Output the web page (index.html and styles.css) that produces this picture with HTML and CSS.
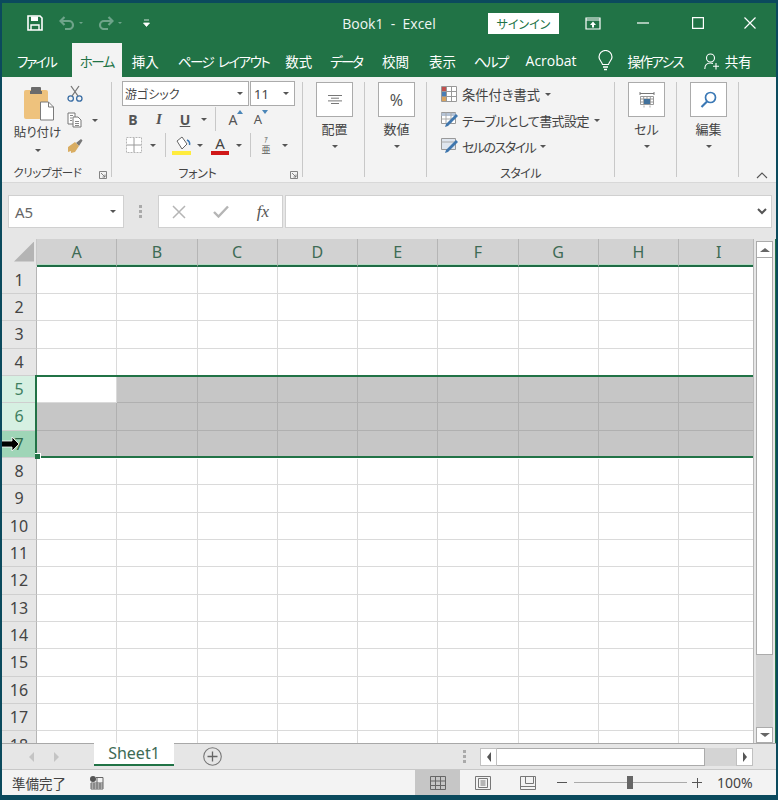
FILE: index.html
```html
<!DOCTYPE html>
<html lang="ja">
<head>
<meta charset="utf-8">
<title>Book1 - Excel</title>
<link rel="stylesheet" href="styles.css">
</head>
<body>
<div class="window">
  <header class="titlebar">
    <div class="qat">
      <svg class="q-save" width="16" height="16" viewBox="0 0 16 16"><path d="M1 1h12l2 2v12H1z" fill="none" stroke="#fff" stroke-width="1.6"/><path d="M4 1.5h7v4.5H4z" fill="#fff"/><path d="M4 15v-5h8v5" fill="none" stroke="#fff" stroke-width="1.4"/></svg>
      <svg class="q-undo" width="16" height="14" viewBox="0 0 16 14"><path d="M2 5h8a4 4 0 0 1 0 8H6M5.500 1 1.500 5l4 4" fill="none" stroke="#6ea48a" stroke-width="2.200"/></svg>
      <span class="q-drop"></span>
      <svg class="q-redo" width="16" height="14" viewBox="0 0 16 14"><path d="M14 5H6a4 4 0 0 0 0 8h4M10.500 1l4 4-4 4" fill="none" stroke="#6ea48a" stroke-width="2.200"/></svg>
      <span class="q-drop"></span>
      <svg class="q-more" width="7" height="8" viewBox="0 0 7 8"><path d="M1 1h5M0.500 4h6l-3 3.500z" fill="#fff" stroke="#fff" stroke-width="0.800"/></svg>
    </div>
    <div class="doc-title">Book1&nbsp; -&nbsp; Excel</div>
    <div class="signin">サインイン</div>
    <svg class="ctl-display" width="16" height="13" viewBox="0 0 16 13"><path d="M1 1h14v11H1z M1 3h14" fill="none" stroke="#fff" stroke-width="1.200"/><path d="M8 4.500 11 8H9v2.500H7V8H5z" fill="#fff"/></svg>
    <svg class="ctl-min" width="12" height="2" viewBox="0 0 12 2"><path d="M0 1h12" stroke="#fff" stroke-width="1.200"/></svg>
    <svg class="ctl-max" width="12" height="12" viewBox="0 0 12 12"><path d="M.6.600h10.800v10.800H.6z" fill="none" stroke="#fff" stroke-width="1.200"/></svg>
    <svg class="ctl-close" width="12" height="12" viewBox="0 0 12 12"><path d="M.5.500l11 11M11.500.500l-11 11" stroke="#fff" stroke-width="1.200"/></svg>
  </header>

  <nav class="tabs">
    <span class="tab t-file">ファイル</span>
    <span class="tab active">ホーム</span>
    <span class="tab t-ins">挿入</span>
    <span class="tab t-page">ページ レイアウト</span>
    <span class="tab t-fx">数式</span>
    <span class="tab t-data">データ</span>
    <span class="tab t-rev">校閲</span>
    <span class="tab t-view">表示</span>
    <span class="tab t-help">ヘルプ</span>
    <span class="tab t-acro">Acrobat</span>
    <svg class="bulb" width="15" height="21" viewBox="0 0 15 21"><path d="M4.500 14.500C4 11.500 1 10.500 1 7a6.500 6.500 0 0 1 13 0c0 3.500-3 4.500-3.500 7.500z" fill="none" stroke="#fff" stroke-width="1.200"/><path d="M5 17h5M6 19.500h3" stroke="#fff" stroke-width="1.300"/></svg>
    <span class="tab t-tell">操作アシス</span>
    <svg class="person" width="16" height="17" viewBox="0 0 16 17"><circle cx="6.500" cy="5" r="4" fill="none" stroke="#fff" stroke-width="1.100"/><path d="M.8 16c0-3.500 2-6 5.700-6 1 0 1.800.2 2.500.5M12 10v6.500M9 13.300h6" fill="none" stroke="#fff" stroke-width="1.100"/></svg>
    <span class="tab t-share">共有</span>
  </nav>

  <section class="ribbon">
    <div class="group g-clip">
      <div class="group-body clip-body">
        <div class="paste">
          <svg width="32" height="36" viewBox="0 0 32 36"><rect x="1" y="5" width="24" height="29" rx="2" fill="#eec27d"/><rect x="8" y="2" width="10" height="7" rx="1" fill="#6b6b6b"/><rect x="7" y="6" width="12" height="3" fill="#6b6b6b"/><path d="M17.500 17h8l5 5v13h-13z" fill="#fff" stroke="#7b7b7b"/><path d="M25.500 17v5h5" fill="none" stroke="#7b7b7b"/></svg>
          <span class="big-label">貼り付け</span>
          <span class="caret"></span>
        </div>
        <div class="clip-tools">
          <svg width="16" height="17" viewBox="0 0 16 17"><circle cx="3.700" cy="13.500" r="2.700" fill="none" stroke="#3a6ea5" stroke-width="1.300"/><circle cx="12.300" cy="13.500" r="2.700" fill="none" stroke="#3a6ea5" stroke-width="1.300"/><path d="M5 11 12 1M11 11 4 1" stroke="#777" stroke-width="1.300"/></svg>
          <div class="copy-line">
            <svg width="16" height="16" viewBox="0 0 16 16"><path d="M1 1h7v11H1z" fill="#fff" stroke="#777"/><path d="M6 5h5l3 3v7H6z" fill="#fff" stroke="#777"/><path d="M3 3.500h3M3 6h2M3 8.500h2M8 9.500h4M8 11.500h4M8 13.500h4" stroke="#888"/></svg>
            <span class="caret"></span>
          </div>
          <svg width="16" height="15" viewBox="0 0 16 15"><path d="M9 5 14 1l1.500 1.500L12 8z" fill="#777"/><path d="M1 9 8 4l4 4-4 6-4 1 0-2-3 1z" fill="#d9ad62"/></svg>
        </div>
      </div>
      <div class="group-label clip-label">クリップボード<svg class="launcher" width="8" height="8" viewBox="0 0 8 8"><path d="M.5 7.500v-7h7v7zM2 2l4 4M6 3.500V6H3.500" fill="none" stroke="#777" stroke-width=".9"/></svg></div>
    </div>

    <div class="group g-font">
      <div class="group-body font-body">
        <div class="font-row combos">
          <div class="combo c-name"><span>游ゴシック</span><span class="caret"></span></div>
          <div class="combo c-size"><span>11</span><span class="caret"></span></div>
        </div>
        <div class="font-row r2">
          <span class="fmt bold">B</span>
          <span class="fmt ital">I</span>
          <span class="fmt und">U</span>
          <span class="caret"></span>
          <span class="vsep vs-a"></span>
          <span class="fmt grow">A<svg width="6" height="4" viewBox="0 0 6 4"><path d="M3 0l3 4H0z" fill="#4a86b8"/></svg></span>
          <span class="fmt shrink">A<svg width="6" height="4" viewBox="0 0 6 4"><path d="M3 4 6 0H0z" fill="#4a86b8"/></svg></span>
        </div>
        <div class="font-row r3">
          <svg class="i-border" width="16" height="16" viewBox="0 0 16 16"><path d="M.5.500h15v15H.5z" fill="#fff" stroke="#b5b5b5" stroke-dasharray="2 1"/><path d="M8 1v14M1 8h14" stroke="#9a9a9a"/></svg>
          <span class="caret c1"></span>
          <span class="vsep vs-b"></span>
          <svg class="i-fill" width="20" height="20" viewBox="0 0 20 20"><path d="M5 6 10 2l5 7-5 5z" fill="#fff" stroke="#666"/><path d="M15 5c2 1 3 3 2.500 5" fill="none" stroke="#3a78b5" stroke-width="1.500"/><rect x="0" y="16" width="19" height="4" fill="#ffec3d"/></svg>
          <span class="caret c2"></span>
          <span class="color-a">A</span>
          <span class="caret c3"></span>
          <span class="vsep vs-c"></span>
          <span class="phon"><small>ｱ</small><span>亜</span></span>
          <span class="caret c4"></span>
        </div>
      </div>
      <div class="group-label font-label">フォント<svg class="launcher" width="8" height="8" viewBox="0 0 8 8"><path d="M.5 7.500v-7h7v7zM2 2l4 4M6 3.500V6H3.500" fill="none" stroke="#777" stroke-width=".9"/></svg></div>
    </div>

    <div class="group g-col">
      <div class="group-body col-body">
        <div class="col-btn"><svg width="14" height="9" viewBox="0 0 14 9"><path d="M0 .5h14M3 3.200h8M0 5.900h14M3 8.500h8" stroke="#777"/></svg></div>
        <span class="big-label">配置</span>
        <span class="caret"></span>
      </div>
    </div>
    <div class="group g-col">
      <div class="group-body col-body">
        <div class="col-btn pct">%</div>
        <span class="big-label">数値</span>
        <span class="caret"></span>
      </div>
    </div>

    <div class="group g-style">
      <div class="group-body style-body">
        <div class="style-row sr1">
          <svg width="16" height="16" viewBox="0 0 16 16"><path d="M.5.500h15v15H.5zM.5 5.500h15M.5 10.500h15M5.500.5v15M10.500.5v15" fill="#fff" stroke="#999"/><rect x="1" y="1" width="4" height="4" fill="#c0504d"/><rect x="1" y="6" width="4" height="4" fill="#4a7eb5"/><rect x="1" y="11" width="4" height="4" fill="#d9a35e"/></svg>
          <span>条件付き書式</span><span class="caret"></span>
        </div>
        <div class="style-row sr2">
          <svg width="18" height="16" viewBox="0 0 18 16"><path d="M.5.500h14v11H.5z" fill="#fff" stroke="#999"/><path d="M.5 1h14v3H.5z" fill="#b5c3d6"/><path d="M5 .5v11M10 .5v11M.5 7h14" stroke="#aaa"/><path d="M4 15l3-1 10-10-2-2L5 12z" fill="#3f76ad"/></svg>
          <span>テーブルとして書式設定</span><span class="caret"></span>
        </div>
        <div class="style-row sr3">
          <svg width="18" height="16" viewBox="0 0 18 16"><path d="M.5.500h14v11H.5z" fill="#dfe6ef" stroke="#999"/><path d="M.5 4h14" stroke="#aaa"/><path d="M4 15l3-1 10-10-2-2L5 12z" fill="#3f76ad"/></svg>
          <span>セルのスタイル</span><span class="caret"></span>
        </div>
      </div>
      <div class="group-label style-label">スタイル</div>
    </div>

    <div class="group g-col">
      <div class="group-body col-body">
        <div class="col-btn"><svg width="16" height="17" viewBox="0 0 16 17"><path d="M1 1v3M15 1v3M1 2.500h14" stroke="#777"/><path d="M1.500 5.500h13v8h-13zM1.500 8h13M1.500 11h13M4.700 5.500v8M8 5.500v8M11.300 5.500v8" fill="none" stroke="#999"/><rect x="5" y="8" width="6" height="5" fill="#41719c"/><path d="M5 14.500v2M11 14.500v2" stroke="#aaa"/></svg></div>
        <span class="big-label">セル</span>
        <span class="caret"></span>
      </div>
    </div>
    <div class="group g-col">
      <div class="group-body col-body">
        <div class="col-btn"><svg width="17" height="17" viewBox="0 0 17 17"><circle cx="10.500" cy="6.500" r="5" fill="none" stroke="#3a78b5" stroke-width="1.700"/><path d="M7 10.500 1.500 16" stroke="#3a78b5" stroke-width="2.200"/></svg></div>
        <span class="big-label">編集</span>
        <span class="caret"></span>
      </div>
    </div>
    <svg class="collapse" width="12" height="7" viewBox="0 0 12 7"><path d="M1 6l5-5 5 5" fill="none" stroke="#555" stroke-width="1.100"/></svg>
  </section>

  <section class="formula">
    <div class="namebox"><span>A5</span><span class="caret"></span></div>
    <svg class="grip" width="4" height="13" viewBox="0 0 4 13"><path d="M0 0h3v3H0zM0 5h3v3H0zM0 10h3v3H0z" fill="#aaa"/></svg>
    <div class="fxbox">
      <svg width="14" height="14" viewBox="0 0 14 14"><path d="M1 1l12 12M13 1 1 13" stroke="#b5b5b5" stroke-width="1.500"/></svg>
      <svg width="16" height="13" viewBox="0 0 16 13"><path d="M1 7l4.500 4.500L15 1.500" fill="none" stroke="#b5b5b5" stroke-width="2.400"/></svg>
      <span class="fx">fx</span>
    </div>
    <div class="fxinput"><svg width="10" height="7" viewBox="0 0 10 7"><path d="M1 1l4 4 4-4" fill="none" stroke="#555" stroke-width="2"/></svg></div>
  </section>

  <section class="sheet">
    <div class="grid">
      <div class="gridcells">
        <div class="corner"><span></span></div><div class="ch">A</div><div class="ch">B</div><div class="ch">C</div><div class="ch">D</div><div class="ch">E</div><div class="ch">F</div><div class="ch">G</div><div class="ch">H</div><div class="ch">I</div>
        <div class="rh">1</div><div class="c"></div><div class="c"></div><div class="c"></div><div class="c"></div><div class="c"></div><div class="c"></div><div class="c"></div><div class="c"></div><div class="c"></div>
        <div class="rh">2</div><div class="c"></div><div class="c"></div><div class="c"></div><div class="c"></div><div class="c"></div><div class="c"></div><div class="c"></div><div class="c"></div><div class="c"></div>
        <div class="rh">3</div><div class="c"></div><div class="c"></div><div class="c"></div><div class="c"></div><div class="c"></div><div class="c"></div><div class="c"></div><div class="c"></div><div class="c"></div>
        <div class="rh">4</div><div class="c"></div><div class="c"></div><div class="c"></div><div class="c"></div><div class="c"></div><div class="c"></div><div class="c"></div><div class="c"></div><div class="c"></div>
        <div class="rh sel">5</div><div class="c active-cell"></div><div class="c s"></div><div class="c s"></div><div class="c s"></div><div class="c s"></div><div class="c s"></div><div class="c s"></div><div class="c s"></div><div class="c s"></div>
        <div class="rh sel">6</div><div class="c s"></div><div class="c s"></div><div class="c s"></div><div class="c s"></div><div class="c s"></div><div class="c s"></div><div class="c s"></div><div class="c s"></div><div class="c s"></div>
        <div class="rh hover">7</div><div class="c s"></div><div class="c s"></div><div class="c s"></div><div class="c s"></div><div class="c s"></div><div class="c s"></div><div class="c s"></div><div class="c s"></div><div class="c s"></div>
        <div class="rh">8</div><div class="c"></div><div class="c"></div><div class="c"></div><div class="c"></div><div class="c"></div><div class="c"></div><div class="c"></div><div class="c"></div><div class="c"></div>
        <div class="rh">9</div><div class="c"></div><div class="c"></div><div class="c"></div><div class="c"></div><div class="c"></div><div class="c"></div><div class="c"></div><div class="c"></div><div class="c"></div>
        <div class="rh">10</div><div class="c"></div><div class="c"></div><div class="c"></div><div class="c"></div><div class="c"></div><div class="c"></div><div class="c"></div><div class="c"></div><div class="c"></div>
        <div class="rh">11</div><div class="c"></div><div class="c"></div><div class="c"></div><div class="c"></div><div class="c"></div><div class="c"></div><div class="c"></div><div class="c"></div><div class="c"></div>
        <div class="rh">12</div><div class="c"></div><div class="c"></div><div class="c"></div><div class="c"></div><div class="c"></div><div class="c"></div><div class="c"></div><div class="c"></div><div class="c"></div>
        <div class="rh">13</div><div class="c"></div><div class="c"></div><div class="c"></div><div class="c"></div><div class="c"></div><div class="c"></div><div class="c"></div><div class="c"></div><div class="c"></div>
        <div class="rh">14</div><div class="c"></div><div class="c"></div><div class="c"></div><div class="c"></div><div class="c"></div><div class="c"></div><div class="c"></div><div class="c"></div><div class="c"></div>
        <div class="rh">15</div><div class="c"></div><div class="c"></div><div class="c"></div><div class="c"></div><div class="c"></div><div class="c"></div><div class="c"></div><div class="c"></div><div class="c"></div>
        <div class="rh">16</div><div class="c"></div><div class="c"></div><div class="c"></div><div class="c"></div><div class="c"></div><div class="c"></div><div class="c"></div><div class="c"></div><div class="c"></div>
        <div class="rh">17</div><div class="c"></div><div class="c"></div><div class="c"></div><div class="c"></div><div class="c"></div><div class="c"></div><div class="c"></div><div class="c"></div><div class="c"></div>
        <div class="rh">18</div><div class="c"></div><div class="c"></div><div class="c"></div><div class="c"></div><div class="c"></div><div class="c"></div><div class="c"></div><div class="c"></div><div class="c"></div>
      </div>
      <div class="selection"><span class="handle"></span></div>
      <svg class="pointer" width="20" height="16" viewBox="0 0 20 16"><path d="M1 5h11V1l7 7-7 7v-4H1z" fill="#000" stroke="#fff" stroke-width=".8"/></svg>
    </div>
    <aside class="vscroll">
      <div class="sb-btn"><span class="tri-up"></span></div>
      <div class="sb-thumb"></div>
      <div class="sb-track"></div>
      <div class="sb-btn"><span class="tri-down"></span></div>
    </aside>
  </section>

  <section class="sheetbar">
    <span class="nav-l"></span>
    <span class="nav-r"></span>
    <div class="sheet-tab">Sheet1</div>
    <svg class="add" width="19" height="19" viewBox="0 0 19 19"><circle cx="9.500" cy="9.500" r="8.800" fill="none" stroke="#777" stroke-width="1.100"/><path d="M9.500 4.500v10M4.500 9.500h10" stroke="#666" stroke-width="1.300"/></svg>
    <svg class="grip2" width="4" height="13" viewBox="0 0 4 13"><path d="M0 0h3v3H0zM0 5h3v3H0zM0 10h3v3H0z" fill="#aaa"/></svg>
    <div class="hscroll">
      <div class="hb"><span class="tri-left"></span></div>
      <div class="h-thumb"></div>
      <div class="h-track"></div>
      <div class="hb"><span class="tri-right"></span></div>
    </div>
  </section>

  <footer class="status">
    <span class="ready">準備完了</span>
    <svg class="macro" width="14" height="14" viewBox="0 0 14 14"><circle cx="3" cy="3" r="3" fill="#555"/><path d="M1 7h12v6H1zM1 9h12M1 11h12M4 7v6M7 2v11M10 7v6M6 1.500h7V7" fill="none" stroke="#666"/></svg>
    <div class="view-btn on"><svg width="16" height="14" viewBox="0 0 16 14"><path d="M.5.500h15v13H.5zM.5 5h15M.5 9.500h15M5.500.5v13M10.500.5v13" fill="none" stroke="#666"/></svg></div>
    <div class="view-btn v2"><svg width="16" height="14" viewBox="0 0 16 14"><path d="M.5.500h15v13H.5z" fill="none" stroke="#777"/><path d="M3.500 2.500h9v9h-9zM5.500 5h5M5.500 7h5M5.500 9h5" fill="none" stroke="#777"/></svg></div>
    <div class="view-btn v3"><svg width="16" height="14" viewBox="0 0 16 14"><path d="M.5.500h15v13H.5zM5.500.5v7h8V.5M.5 10.500h15" fill="none" stroke="#777"/></svg></div>
    <span class="zoom-minus"></span>
    <div class="slider"><span class="slider-thumb"></span></div>
    <span class="zoom-plus"></span>
    <span class="zoom-val">100%</span>
  </footer>
</div>
</body>
</html>
```

FILE: styles.css
```css
* { box-sizing: border-box; }
html, body { margin: 0; padding: 0; }
body {
  width: 778px; height: 800px; overflow: hidden;
  background: #0b4a5d;
  font-family: "Noto Sans CJK JP", "Noto Sans", sans-serif;
  font-feature-settings: "palt";
  color: #444;
}
.window {
  margin: 3px 0 0 2px; width: 774px; height: 792px;
  display: flex; flex-direction: column;
  background: #e6e6e6; overflow: hidden;
}
svg { display: block; flex: none; }

/* title bar */
.titlebar { height: 40px; background: #217346; display: flex; align-items: center; color: #fff; flex: none; }
.qat { display: flex; align-items: center; width: 308px; padding-left: 25px; }
.q-undo { margin-left: 16px; }
.q-redo { margin-left: 15px; }
.q-drop { width: 0; height: 0; margin-left: 4px; border: 2.500px solid transparent; border-top-color: #6ea48a; border-bottom: 0; }
.q-more { margin-left: 21px; }
.doc-title { width: 178px; text-align: center; font-size: 14px; font-family: "Open Sans", sans-serif; color: #f0f6f3; padding-right: 20px; white-space: nowrap; }
.signin { width: 71px; height: 21px; background: #fff; color: #217346; font-size: 12px; line-height: 21px; text-align: center; }
.ctl-display { margin-left: 26px; }
.ctl-min { margin-left: 36px; }
.ctl-max { margin-left: 43px; }
.ctl-close { margin-left: 40px; }

/* tabs */
.tabs { height: 34px; background: #217346; display: flex; align-items: stretch; color: #fff; font-size: 13.500px; flex: none; padding-left: 15px; }
.tab { display: flex; align-items: center; white-space: nowrap; padding-top: 1px; }
.t-file { letter-spacing: -2px; }
.tab.active { background: #f3f3f3; color: #217346; width: 50px; justify-content: center; margin-left: 16px; letter-spacing: -1.500px; }
.t-ins { margin-left: 10px; }
.t-page { margin-left: 19px; letter-spacing: -1.500px; word-spacing: 3px; }
.t-fx { margin-left: 16px; }
.t-data { margin-left: 18px; letter-spacing: -2px; }
.t-rev { margin-left: 20px; }
.t-view { margin-left: 20px; }
.t-help { margin-left: 18px; letter-spacing: -1.700px; }
.t-acro { margin-left: 18px; font-family: "Open Sans", sans-serif; font-size: 14px; }
.bulb { margin: 7px 0 0 21px; }
.t-tell { margin-left: 15px; font-size: 13.500px; letter-spacing: -1.700px; }
.person { margin: 10px 0 0 21px; }
.t-share { margin-left: 5px; }

/* ribbon */
.ribbon { height: 106px; background: #f3f3f3; display: flex; padding: 5px 0 5px 0; position: relative; flex: none; border-bottom: 1px solid #d8d8d8; }
.group { display: flex; flex-direction: column; border-right: 1px solid #c8c8c8; flex: none; }
.group-body { flex: 1; min-height: 0; }
.group-label { height: 17px; margin-bottom: -4px; font-size: 12px; line-height: 17px; text-align: center; position: relative; color: #444; }
.launcher { position: absolute; right: 4px; top: 7px; }
.caret { display: inline-block; width: 0; height: 0; flex: none; border: 3px solid transparent; border-top-color: #555; border-bottom: 0; }
.big-label { font-size: 13px; line-height: 18px; color: #444; white-space: nowrap; }

.g-clip { width: 110px; }
.clip-body { display: flex; padding: 3px 0 0 9px; }
.paste { width: 53px; display: flex; flex-direction: column; align-items: center; padding-left: 3px; }
.paste .big-label { margin-top: 2px; font-size: 12.500px; margin-left: -3px; }
.paste .caret { margin-top: 8px; margin-left: -3px; }
.clip-tools { display: flex; flex-direction: column; gap: 10px; margin-left: 3px; }
.copy-line { display: flex; align-items: center; gap: 9px; }
.clip-label { padding-right: 18px; font-size: 11.500px; letter-spacing: -.4px; }

.g-font { width: 191px; }
.font-body { padding-left: 10px; }
.font-row { display: flex; align-items: center; }
.combos { height: 25px; margin-top: -1px; }
.combo { height: 25px; background: #fff; border: 1px solid #ababab; display: flex; align-items: center; justify-content: space-between; font-size: 12px; padding: 0 5px 0 2px; }
.c-name { width: 127px; }
.c-size { width: 45px; margin-left: 1px; padding-left: 3px; font-family: "Noto Sans", sans-serif; font-size: 13px; }
.r2 { height: 26px; }
.r3 { height: 26px; }
.fmt { width: 26px; display: flex; justify-content: center; font-family: "Noto Sans", sans-serif; font-size: 14px; color: #555; position: relative; }
.r2 .fmt:first-child { margin-left: -2px; }
.bold { font-weight: 700; }
.ital { font-style: italic; font-weight: 700; font-family: "Liberation Serif", serif; font-size: 15px; }
.und { font-weight: 700; text-decoration: underline; }
.r2 .caret { margin-left: 3px; }
.vsep { width: 1px; height: 24px; background: #c8c8c8; }
.vs-a { margin: 0 3px 0 8px; }
.grow { font-weight: 400; margin-left: 1px; }
.shrink { font-weight: 400; font-size: 13px; margin-left: -1px; }
.fmt svg { position: absolute; top: 0; right: 3px; }
.i-border { margin-left: 4px; }
.r3 .c1 { margin-left: 8px; }
.vs-b { margin: 0 6px 0 9px; }
.r3 .c2 { margin-left: 5px; }
.color-a { margin-left: 8px; width: 18px; font-size: 15px; line-height: 15px; text-align: center; color: #444; border-bottom: 4px solid #d01818; font-family: "Noto Sans", sans-serif; }
.r3 .c3 { margin-left: 7px; }
.vs-c { margin: 0 9px 0 8px; }
.phon { width: 12px; font-size: 9px; line-height: 9px; text-align: center; color: #555; display: flex; flex-direction: column; gap: 2px; }
.phon small { font-size: 7px; line-height: 7px; }
.r3 .c4 { margin-left: 10px; }
.font-label { padding-right: 19px; letter-spacing: -.3px; }
.style-label { letter-spacing: -.6px; }

.g-col { width: 62px; }
.col-body { display: flex; flex-direction: column; align-items: center; padding-left: 2px; }
.col-btn { width: 37px; height: 35px; background: #fff; border: 1px solid #ababab; display: flex; align-items: center; justify-content: center; }
.pct { font-size: 16px; color: #555; font-family: "Noto Sans", sans-serif; }
.col-body .big-label { margin-top: 3px; }
.col-body .caret { margin-top: 7px; }

.g-style { width: 188px; }
.style-body { padding: 0 0 0 14px; margin-top: -1px; display: flex; flex-direction: column; }
.style-row { height: 26px; display: flex; align-items: center; gap: 3px; font-size: 13px; white-space: nowrap; color: #444; margin-top: 0; }
.sr1 { gap: 5px; font-size: 13.300px; }
.sr1 .caret { margin-left: 0; }
.sr2 span:nth-child(2) { letter-spacing: -.6px; }
.sr3 span:nth-child(2) { letter-spacing: -1.500px; }
.sr2 .caret, .sr3 .caret { margin-left: 2px; }
.collapse { position: absolute; right: 8px; bottom: 3px; }

/* formula bar */
.formula { height: 56px; display: flex; align-items: flex-start; padding-top: 12px; flex: none; background: #e6e6e6; }
.namebox { width: 116px; height: 33px; margin-left: 6px; background: #fff; border: 1px solid #d0d0d0; display: flex; align-items: center; justify-content: space-between; padding: 0 7px 0 6px; font-size: 15px; color: #666; font-family: "Noto Sans", sans-serif; }
.grip { margin: 10px 0 0 15px; }
.fxbox { width: 125px; height: 33px; margin-left: 15px; background: #fff; border: 1px solid #d0d0d0; display: flex; align-items: center; padding: 0 13px; justify-content: space-between; }
.fx { font-family: "Liberation Serif", serif; font-style: italic; font-size: 17px; color: #555; }
.fxinput { width: 487px; height: 33px; margin-left: 2px; background: #fff; border: 1px solid #d0d0d0; display: flex; align-items: center; justify-content: flex-end; padding-right: 4px; }

/* sheet */
.sheet { height: 504px; display: flex; flex: none; background: #fff; }
.grid { width: 751px; position: relative; overflow: hidden; flex: none; }
.gridcells { display: grid; grid-template-columns: 35px repeat(9, 80.250px); grid-template-rows: 27.500px; grid-auto-rows: 27.350px; width: 758px; }
.corner { background: #e6e6e6; display: flex; align-items: flex-end; justify-content: flex-end; padding: 0 2px 3px 0; border-right: 1px solid #c8c8c8; border-bottom: 2px solid #e6e6e6; }
.corner span { width: 20px; height: 20px; background: #b4b4b4; clip-path: polygon(100% 0, 100% 100%, 0 100%); }
.ch { background: #d2d2d2; border-right: 1px solid #b5b5b5; border-bottom: 2px solid #1f6b45; display: flex; align-items: center; justify-content: center; font-family: "Noto Sans", sans-serif; font-size: 16px; color: #3e6b55; box-shadow: inset 0 -1px 0 #b6dcc6; }
.rh { background: #e6e6e6; border-right: 1px solid #b5b5b5; border-bottom: 1px solid #cfcfcf; display: flex; align-items: center; justify-content: center; font-family: "Noto Sans", sans-serif; font-size: 16px; color: #444; }
.rh.sel { background: #d6f0e2; color: #3f7f60; }
.rh.hover { background: #9fd5b7; color: #2f6b4c; }
.c { background: #fff; border-right: 1px solid #dadada; border-bottom: 1px solid #dadada; }
.c.s { background: #c6c6c6; border-color: #b0b0b0; }
.c.active-cell { background: #fff; }
.selection { position: absolute; left: 33px; right: 0; top: 136px; height: 83px; border: 2px solid #217346; border-right: 0; box-shadow: 0 1px 0 #fff; }
.handle { position: absolute; left: -2px; bottom: -3px; width: 6px; height: 6px; background: #217346; border-right: 1px solid #fff; border-top: 1px solid #fff; }
.pointer { position: absolute; left: -2px; top: 197px; }

.vscroll { width: 23px; flex: none; background: #e6e6e6; padding: 2px 2px 0 2px; display: flex; flex-direction: column; border-left: 1px solid #b8b8b8; border-right: 1px solid #217346; }
.sb-btn { height: 17px; background: #fff; border: 1px solid #ababab; display: flex; align-items: center; justify-content: center; flex: none; }
.sb-thumb { height: 397px; background: #fff; border: 1px solid #ababab; border-top: 0; flex: none; }
.sb-track { flex: 1; background: #d4d4d4; }
.vscroll .sb-btn:last-child { height: 16px; }
.tri-up { border: 5px solid transparent; border-bottom: 4px solid #666; border-top: 0; }
.tri-down { border: 5px solid transparent; border-top: 4px solid #666; border-bottom: 0; }
.tri-left { border: 5px solid transparent; border-right: 4px solid #555; border-left: 0; }
.tri-right { border: 5px solid transparent; border-left: 4px solid #555; border-right: 0; }

/* sheet tabs */
.sheetbar { height: 27px; flex: none; background: #e6e6e6; border-top: 1px solid #a8a8a8; border-bottom: 1px solid #c8c8c8; display: flex; align-items: center; }
.nav-l { margin-left: 27px; border: 5px solid transparent; border-right: 5px solid #c4c4c4; border-left: 0; }
.nav-r { margin-left: 20px; border: 5px solid transparent; border-left: 5px solid #c4c4c4; border-right: 0; }
.sheet-tab { width: 80px; height: 23px; margin: -1px 0 0 35px; background: #fff; border-bottom: 2px solid #217346; color: #3e6b55; font-size: 16px; text-align: center; line-height: 21px; font-family: "Noto Sans", sans-serif; align-self: flex-start; }
.add { margin-left: 29px; }
.grip2 { margin-left: 241px; }
.hscroll { display: flex; height: 18px; margin-left: 13px; width: 273px; }
.hb { width: 17px; background: #fff; border: 1px solid #c0c0c0; display: flex; align-items: center; justify-content: center; flex: none; }
.h-thumb { width: 208px; background: #fff; border: 1px solid #ababab; border-left: 0; flex: none; }
.h-track { flex: 1; background: #d4d4d4; }

/* status */
.status { height: 25px; flex: none; background: #f3f3f3; display: flex; align-items: center; }
.ready { margin-left: 10px; font-size: 13.500px; width: 54px; white-space: nowrap; }
.macro { margin-left: 24px; }
.view-btn { width: 45px; height: 25px; display: flex; align-items: center; justify-content: center; }
.view-btn.on { background: #c6c6c6; margin-left: 311px; }
.view-btn.v2 { margin-left: 0; }
.view-btn.v3 { margin-left: 0; }
.zoom-minus { width: 10px; height: 1px; background: #555; margin-left: 7px; }
.slider { width: 113px; height: 1px; background: #aaa; margin-left: 7px; position: relative; }
.slider-thumb { position: absolute; left: 53px; top: -6px; width: 6px; height: 13px; background: #666; }
.zoom-plus { width: 10px; height: 10px; margin-left: 5px; background: linear-gradient(#555, #555) center / 100% 1px no-repeat, linear-gradient(#555, #555) center / 1px 100% no-repeat; }
.zoom-val { margin-left: 15px; font-size: 14px; font-family: "Noto Sans", sans-serif; color: #444; }
```
